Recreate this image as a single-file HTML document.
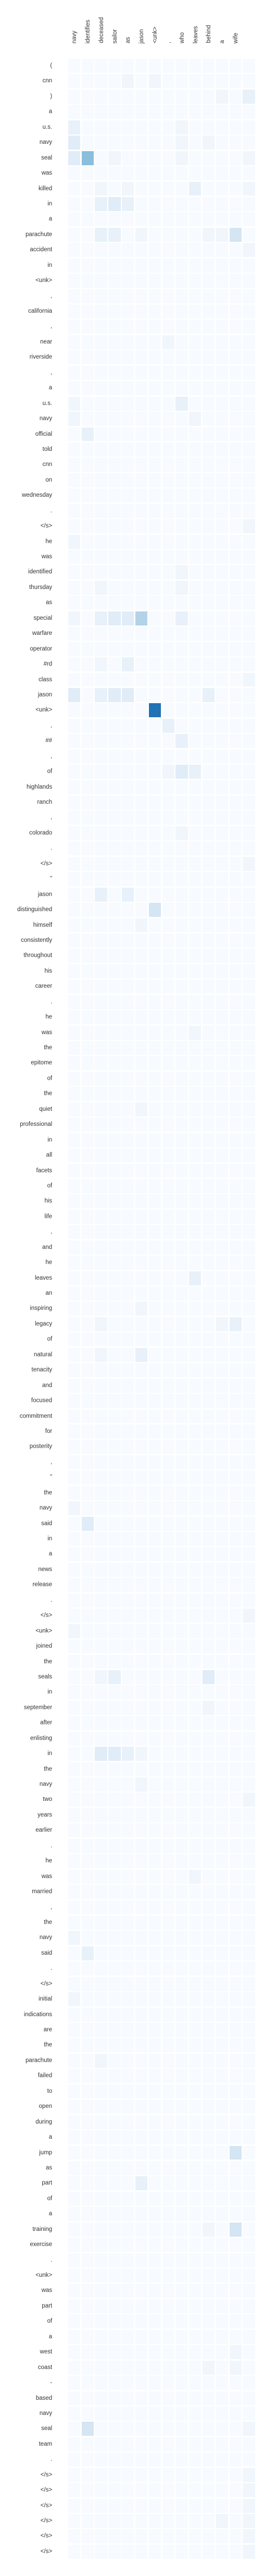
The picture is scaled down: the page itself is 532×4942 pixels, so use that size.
<!DOCTYPE html>
<html><head><meta charset="utf-8">
<style>
*{margin:0;padding:0;box-sizing:border-box}
html,body{width:532px;height:4942px;background:#fff;overflow:hidden}
body{position:relative;font-family:"Liberation Sans",sans-serif;font-size:11.5px;color:#333}
#hd{position:absolute;left:130.7px;top:0;height:83px;display:flex;align-items:flex-end}
#hd div{width:25.83px;display:flex;justify-content:center;align-items:flex-end;height:83px}
#hd span{writing-mode:vertical-rl;transform:rotate(180deg);line-height:13px;white-space:nowrap}
#g{position:absolute;left:30.2px;top:113px;display:grid;grid-template-columns:98px repeat(14,23.3px);grid-auto-rows:26.94px;column-gap:2.54px;row-gap:2.5px}
#g b{font-weight:normal;text-align:right;padding-right:28px;line-height:26.94px;white-space:nowrap;overflow:visible}
#g i{display:block;background:#f7fbff}
#g i.a{background:#f0f6fc}#g i.b{background:#e8f1fa}#g i.c{background:#e0ecf8}#g i.d{background:#d4e5f3}#g i.e{background:#b3d3e8}#g i.f{background:#89bedc}#g i.g{background:#2171b5}
</style></head><body>
<div id="hd"><div><span>navy</span></div><div><span>identifies</span></div><div><span>deceased</span></div><div><span>sailor</span></div><div><span>as</span></div><div><span>jason</span></div><div><span>&lt;unk&gt;</span></div><div><span>,</span></div><div><span>who</span></div><div><span>leaves</span></div><div><span>behind</span></div><div><span>a</span></div><div><span>wife</span></div><div><span></span></div></div>
<div id="g">
<b>(</b><i></i><i></i><i></i><i></i><i></i><i></i><i></i><i></i><i></i><i></i><i></i><i></i><i></i><i></i>
<b>cnn</b><i></i><i></i><i></i><i></i><i class="a"></i><i></i><i class="a"></i><i></i><i></i><i></i><i></i><i></i><i></i><i></i>
<b>)</b><i></i><i></i><i></i><i></i><i></i><i></i><i></i><i></i><i></i><i></i><i></i><i class="a"></i><i></i><i class="b"></i>
<b>a</b><i></i><i></i><i></i><i></i><i></i><i></i><i></i><i></i><i></i><i></i><i></i><i></i><i></i><i></i>
<b>u.s.</b><i class="b"></i><i></i><i></i><i></i><i></i><i></i><i></i><i></i><i class="a"></i><i></i><i></i><i></i><i></i><i></i>
<b>navy</b><i class="c"></i><i></i><i></i><i></i><i></i><i></i><i></i><i></i><i class="a"></i><i></i><i class="a"></i><i></i><i></i><i></i>
<b>seal</b><i class="c"></i><i class="f"></i><i></i><i class="a"></i><i></i><i></i><i></i><i></i><i class="a"></i><i></i><i></i><i></i><i></i><i class="a"></i>
<b>was</b><i></i><i></i><i></i><i></i><i></i><i></i><i></i><i></i><i></i><i></i><i></i><i></i><i></i><i></i>
<b>killed</b><i></i><i></i><i class="a"></i><i></i><i class="a"></i><i></i><i></i><i></i><i></i><i class="b"></i><i></i><i></i><i></i><i class="a"></i>
<b>in</b><i></i><i></i><i class="b"></i><i class="c"></i><i class="b"></i><i></i><i></i><i></i><i></i><i></i><i></i><i></i><i></i><i></i>
<b>a</b><i></i><i></i><i></i><i></i><i></i><i></i><i></i><i></i><i></i><i></i><i></i><i></i><i></i><i></i>
<b>parachute</b><i></i><i></i><i class="b"></i><i class="b"></i><i></i><i class="a"></i><i></i><i></i><i></i><i></i><i class="a"></i><i class="a"></i><i class="d"></i><i></i>
<b>accident</b><i></i><i></i><i></i><i></i><i></i><i></i><i></i><i></i><i></i><i></i><i></i><i></i><i></i><i class="a"></i>
<b>in</b><i></i><i></i><i></i><i></i><i></i><i></i><i></i><i></i><i></i><i></i><i></i><i></i><i></i><i></i>
<b>&lt;unk&gt;</b><i></i><i></i><i></i><i></i><i></i><i></i><i></i><i></i><i></i><i></i><i></i><i></i><i></i><i></i>
<b>,</b><i></i><i></i><i></i><i></i><i></i><i></i><i></i><i></i><i></i><i></i><i></i><i></i><i></i><i></i>
<b>california</b><i></i><i></i><i></i><i></i><i></i><i></i><i></i><i></i><i></i><i></i><i></i><i></i><i></i><i></i>
<b>,</b><i></i><i></i><i></i><i></i><i></i><i></i><i></i><i></i><i></i><i></i><i></i><i></i><i></i><i></i>
<b>near</b><i></i><i></i><i></i><i></i><i></i><i></i><i></i><i class="a"></i><i></i><i></i><i></i><i></i><i></i><i></i>
<b>riverside</b><i></i><i></i><i></i><i></i><i></i><i></i><i></i><i></i><i></i><i></i><i></i><i></i><i></i><i></i>
<b>,</b><i></i><i></i><i></i><i></i><i></i><i></i><i></i><i></i><i></i><i></i><i></i><i></i><i></i><i></i>
<b>a</b><i></i><i></i><i></i><i></i><i></i><i></i><i></i><i></i><i></i><i></i><i></i><i></i><i></i><i></i>
<b>u.s.</b><i class="a"></i><i></i><i></i><i></i><i></i><i></i><i></i><i></i><i class="b"></i><i></i><i></i><i></i><i></i><i></i>
<b>navy</b><i class="a"></i><i></i><i></i><i></i><i></i><i></i><i></i><i></i><i></i><i class="a"></i><i></i><i></i><i></i><i></i>
<b>official</b><i></i><i class="b"></i><i></i><i></i><i></i><i></i><i></i><i></i><i></i><i></i><i></i><i></i><i></i><i></i>
<b>told</b><i></i><i></i><i></i><i></i><i></i><i></i><i></i><i></i><i></i><i></i><i></i><i></i><i></i><i></i>
<b>cnn</b><i></i><i></i><i></i><i></i><i></i><i></i><i></i><i></i><i></i><i></i><i></i><i></i><i></i><i></i>
<b>on</b><i></i><i></i><i></i><i></i><i></i><i></i><i></i><i></i><i></i><i></i><i></i><i></i><i></i><i></i>
<b>wednesday</b><i></i><i></i><i></i><i></i><i></i><i></i><i></i><i></i><i></i><i></i><i></i><i></i><i></i><i></i>
<b>.</b><i></i><i></i><i></i><i></i><i></i><i></i><i></i><i></i><i></i><i></i><i></i><i></i><i></i><i></i>
<b>&lt;/s&gt;</b><i></i><i></i><i></i><i></i><i></i><i></i><i></i><i></i><i></i><i></i><i></i><i></i><i></i><i class="a"></i>
<b>he</b><i class="a"></i><i></i><i></i><i></i><i></i><i></i><i></i><i></i><i></i><i></i><i></i><i></i><i></i><i></i>
<b>was</b><i></i><i></i><i></i><i></i><i></i><i></i><i></i><i></i><i></i><i></i><i></i><i></i><i></i><i></i>
<b>identified</b><i></i><i></i><i></i><i></i><i></i><i></i><i></i><i></i><i class="a"></i><i></i><i></i><i></i><i></i><i></i>
<b>thursday</b><i></i><i></i><i class="a"></i><i></i><i></i><i></i><i></i><i></i><i class="a"></i><i></i><i></i><i></i><i></i><i></i>
<b>as</b><i></i><i></i><i></i><i></i><i></i><i></i><i></i><i></i><i></i><i></i><i></i><i></i><i></i><i></i>
<b>special</b><i class="a"></i><i></i><i class="b"></i><i class="c"></i><i class="c"></i><i class="e"></i><i></i><i></i><i class="b"></i><i></i><i></i><i></i><i></i><i></i>
<b>warfare</b><i></i><i></i><i></i><i></i><i></i><i></i><i></i><i></i><i></i><i></i><i></i><i></i><i></i><i></i>
<b>operator</b><i></i><i></i><i></i><i></i><i></i><i></i><i></i><i></i><i></i><i></i><i></i><i></i><i></i><i></i>
<b>#rd</b><i></i><i></i><i class="a"></i><i></i><i class="b"></i><i></i><i></i><i></i><i></i><i></i><i></i><i></i><i></i><i></i>
<b>class</b><i></i><i></i><i></i><i></i><i></i><i></i><i></i><i></i><i></i><i></i><i></i><i></i><i></i><i class="a"></i>
<b>jason</b><i class="c"></i><i></i><i class="b"></i><i class="c"></i><i class="c"></i><i></i><i></i><i></i><i></i><i></i><i class="b"></i><i></i><i></i><i></i>
<b>&lt;unk&gt;</b><i></i><i></i><i></i><i></i><i></i><i></i><i class="g"></i><i></i><i></i><i></i><i></i><i></i><i></i><i></i>
<b>,</b><i></i><i></i><i></i><i></i><i></i><i></i><i></i><i class="b"></i><i></i><i></i><i></i><i></i><i></i><i></i>
<b>##</b><i></i><i></i><i></i><i></i><i></i><i></i><i></i><i></i><i class="b"></i><i></i><i></i><i></i><i></i><i></i>
<b>,</b><i></i><i></i><i></i><i></i><i></i><i></i><i></i><i></i><i></i><i></i><i></i><i></i><i></i><i></i>
<b>of</b><i></i><i></i><i></i><i></i><i></i><i></i><i></i><i class="a"></i><i class="c"></i><i class="b"></i><i></i><i></i><i></i><i></i>
<b>highlands</b><i></i><i></i><i></i><i></i><i></i><i></i><i></i><i></i><i></i><i></i><i></i><i></i><i></i><i></i>
<b>ranch</b><i></i><i></i><i></i><i></i><i></i><i></i><i></i><i></i><i></i><i></i><i></i><i></i><i></i><i></i>
<b>,</b><i></i><i></i><i></i><i></i><i></i><i></i><i></i><i></i><i></i><i></i><i></i><i></i><i></i><i></i>
<b>colorado</b><i></i><i></i><i></i><i></i><i></i><i></i><i></i><i></i><i class="a"></i><i></i><i></i><i></i><i></i><i></i>
<b>.</b><i></i><i></i><i></i><i></i><i></i><i></i><i></i><i></i><i></i><i></i><i></i><i></i><i></i><i></i>
<b>&lt;/s&gt;</b><i></i><i></i><i></i><i></i><i></i><i></i><i></i><i></i><i></i><i></i><i></i><i></i><i></i><i class="a"></i>
<b>"</b><i></i><i></i><i></i><i></i><i></i><i></i><i></i><i></i><i></i><i></i><i></i><i></i><i></i><i></i>
<b>jason</b><i></i><i></i><i class="b"></i><i></i><i class="b"></i><i></i><i></i><i></i><i></i><i></i><i></i><i></i><i></i><i></i>
<b>distinguished</b><i></i><i></i><i></i><i></i><i></i><i></i><i class="d"></i><i></i><i></i><i></i><i></i><i></i><i></i><i></i>
<b>himself</b><i></i><i></i><i></i><i></i><i></i><i class="a"></i><i></i><i></i><i></i><i></i><i></i><i></i><i></i><i></i>
<b>consistently</b><i></i><i></i><i></i><i></i><i></i><i></i><i></i><i></i><i></i><i></i><i></i><i></i><i></i><i></i>
<b>throughout</b><i></i><i></i><i></i><i></i><i></i><i></i><i></i><i></i><i></i><i></i><i></i><i></i><i></i><i></i>
<b>his</b><i></i><i></i><i></i><i></i><i></i><i></i><i></i><i></i><i></i><i></i><i></i><i></i><i></i><i></i>
<b>career</b><i></i><i></i><i></i><i></i><i></i><i></i><i></i><i></i><i></i><i></i><i></i><i></i><i></i><i></i>
<b>.</b><i></i><i></i><i></i><i></i><i></i><i></i><i></i><i></i><i></i><i></i><i></i><i></i><i></i><i></i>
<b>he</b><i></i><i></i><i></i><i></i><i></i><i></i><i></i><i></i><i></i><i></i><i></i><i></i><i></i><i></i>
<b>was</b><i></i><i></i><i></i><i></i><i></i><i></i><i></i><i></i><i></i><i class="a"></i><i></i><i></i><i></i><i></i>
<b>the</b><i></i><i></i><i></i><i></i><i></i><i></i><i></i><i></i><i></i><i></i><i></i><i></i><i></i><i></i>
<b>epitome</b><i></i><i></i><i></i><i></i><i></i><i></i><i></i><i></i><i></i><i></i><i></i><i></i><i></i><i></i>
<b>of</b><i></i><i></i><i></i><i></i><i></i><i></i><i></i><i></i><i></i><i></i><i></i><i></i><i></i><i></i>
<b>the</b><i></i><i></i><i></i><i></i><i></i><i></i><i></i><i></i><i></i><i></i><i></i><i></i><i></i><i></i>
<b>quiet</b><i></i><i></i><i></i><i></i><i></i><i class="a"></i><i></i><i></i><i></i><i></i><i></i><i></i><i></i><i></i>
<b>professional</b><i></i><i></i><i></i><i></i><i></i><i></i><i></i><i></i><i></i><i></i><i></i><i></i><i></i><i></i>
<b>in</b><i></i><i></i><i></i><i></i><i></i><i></i><i></i><i></i><i></i><i></i><i></i><i></i><i></i><i></i>
<b>all</b><i></i><i></i><i></i><i></i><i></i><i></i><i></i><i></i><i></i><i></i><i></i><i></i><i></i><i></i>
<b>facets</b><i></i><i></i><i></i><i></i><i></i><i></i><i></i><i></i><i></i><i></i><i></i><i></i><i></i><i></i>
<b>of</b><i></i><i></i><i></i><i></i><i></i><i></i><i></i><i></i><i></i><i></i><i></i><i></i><i></i><i></i>
<b>his</b><i></i><i></i><i></i><i></i><i></i><i></i><i></i><i></i><i></i><i></i><i></i><i></i><i></i><i></i>
<b>life</b><i></i><i></i><i></i><i></i><i></i><i></i><i></i><i></i><i></i><i></i><i></i><i></i><i></i><i></i>
<b>,</b><i></i><i></i><i></i><i></i><i></i><i></i><i></i><i></i><i></i><i></i><i></i><i></i><i></i><i></i>
<b>and</b><i></i><i></i><i></i><i></i><i></i><i></i><i></i><i></i><i></i><i></i><i></i><i></i><i></i><i></i>
<b>he</b><i></i><i></i><i></i><i></i><i></i><i></i><i></i><i></i><i></i><i></i><i></i><i></i><i></i><i></i>
<b>leaves</b><i></i><i></i><i></i><i></i><i></i><i></i><i></i><i></i><i></i><i class="b"></i><i></i><i></i><i></i><i></i>
<b>an</b><i></i><i></i><i></i><i></i><i></i><i></i><i></i><i></i><i></i><i></i><i></i><i></i><i></i><i></i>
<b>inspiring</b><i></i><i></i><i></i><i></i><i></i><i class="a"></i><i></i><i></i><i></i><i></i><i></i><i></i><i></i><i></i>
<b>legacy</b><i></i><i></i><i class="a"></i><i></i><i></i><i></i><i></i><i></i><i></i><i></i><i></i><i class="a"></i><i class="b"></i><i></i>
<b>of</b><i></i><i></i><i></i><i></i><i></i><i></i><i></i><i></i><i></i><i></i><i></i><i></i><i></i><i></i>
<b>natural</b><i></i><i></i><i class="a"></i><i></i><i></i><i class="b"></i><i></i><i></i><i></i><i></i><i></i><i></i><i></i><i></i>
<b>tenacity</b><i></i><i></i><i></i><i></i><i></i><i></i><i></i><i></i><i></i><i></i><i></i><i></i><i></i><i></i>
<b>and</b><i></i><i></i><i></i><i></i><i></i><i></i><i></i><i></i><i></i><i></i><i></i><i></i><i></i><i></i>
<b>focused</b><i></i><i></i><i></i><i></i><i></i><i></i><i></i><i></i><i></i><i></i><i></i><i></i><i></i><i></i>
<b>commitment</b><i></i><i></i><i></i><i></i><i></i><i></i><i></i><i></i><i></i><i></i><i></i><i></i><i></i><i></i>
<b>for</b><i></i><i></i><i></i><i></i><i></i><i></i><i></i><i></i><i></i><i></i><i></i><i></i><i></i><i></i>
<b>posterity</b><i></i><i></i><i></i><i></i><i></i><i></i><i></i><i></i><i></i><i></i><i></i><i></i><i></i><i></i>
<b>,</b><i></i><i></i><i></i><i></i><i></i><i></i><i></i><i></i><i></i><i></i><i></i><i></i><i></i><i></i>
<b>"</b><i></i><i></i><i></i><i></i><i></i><i></i><i></i><i></i><i></i><i></i><i></i><i></i><i></i><i></i>
<b>the</b><i></i><i></i><i></i><i></i><i></i><i></i><i></i><i></i><i></i><i></i><i></i><i></i><i></i><i></i>
<b>navy</b><i class="a"></i><i></i><i></i><i></i><i></i><i></i><i></i><i></i><i></i><i></i><i></i><i></i><i></i><i></i>
<b>said</b><i></i><i class="c"></i><i></i><i></i><i></i><i></i><i></i><i></i><i></i><i></i><i></i><i></i><i></i><i></i>
<b>in</b><i></i><i></i><i></i><i></i><i></i><i></i><i></i><i></i><i></i><i></i><i></i><i></i><i></i><i></i>
<b>a</b><i></i><i></i><i></i><i></i><i></i><i></i><i></i><i></i><i></i><i></i><i></i><i></i><i></i><i></i>
<b>news</b><i></i><i></i><i></i><i></i><i></i><i></i><i></i><i></i><i></i><i></i><i></i><i></i><i></i><i></i>
<b>release</b><i></i><i></i><i></i><i></i><i></i><i></i><i></i><i></i><i></i><i></i><i></i><i></i><i></i><i></i>
<b>.</b><i></i><i></i><i></i><i></i><i></i><i></i><i></i><i></i><i></i><i></i><i></i><i></i><i></i><i></i>
<b>&lt;/s&gt;</b><i></i><i></i><i></i><i></i><i></i><i></i><i></i><i></i><i></i><i></i><i></i><i></i><i></i><i class="a"></i>
<b>&lt;unk&gt;</b><i class="a"></i><i></i><i></i><i></i><i></i><i></i><i></i><i></i><i></i><i></i><i></i><i></i><i></i><i></i>
<b>joined</b><i></i><i></i><i></i><i></i><i></i><i></i><i></i><i></i><i></i><i></i><i></i><i></i><i></i><i></i>
<b>the</b><i></i><i></i><i></i><i></i><i></i><i></i><i></i><i></i><i></i><i></i><i></i><i></i><i></i><i></i>
<b>seals</b><i></i><i></i><i class="a"></i><i class="b"></i><i></i><i></i><i></i><i></i><i></i><i></i><i class="c"></i><i></i><i></i><i></i>
<b>in</b><i></i><i></i><i></i><i></i><i></i><i></i><i></i><i></i><i></i><i></i><i></i><i></i><i></i><i></i>
<b>september</b><i></i><i></i><i></i><i></i><i></i><i></i><i></i><i></i><i></i><i></i><i class="a"></i><i></i><i></i><i></i>
<b>after</b><i></i><i></i><i></i><i></i><i></i><i></i><i></i><i></i><i></i><i></i><i></i><i></i><i></i><i></i>
<b>enlisting</b><i></i><i></i><i></i><i></i><i></i><i></i><i></i><i></i><i></i><i></i><i></i><i></i><i></i><i></i>
<b>in</b><i></i><i></i><i class="c"></i><i class="c"></i><i class="b"></i><i class="a"></i><i></i><i></i><i></i><i></i><i></i><i></i><i></i><i></i>
<b>the</b><i></i><i></i><i></i><i></i><i></i><i></i><i></i><i></i><i></i><i></i><i></i><i></i><i></i><i></i>
<b>navy</b><i></i><i></i><i></i><i></i><i></i><i class="a"></i><i></i><i></i><i></i><i></i><i></i><i></i><i></i><i></i>
<b>two</b><i></i><i></i><i></i><i></i><i></i><i></i><i></i><i></i><i></i><i></i><i></i><i></i><i></i><i class="a"></i>
<b>years</b><i></i><i></i><i></i><i></i><i></i><i></i><i></i><i></i><i></i><i></i><i></i><i></i><i></i><i></i>
<b>earlier</b><i></i><i></i><i></i><i></i><i></i><i></i><i></i><i></i><i></i><i></i><i></i><i></i><i></i><i></i>
<b>.</b><i></i><i></i><i></i><i></i><i></i><i></i><i></i><i></i><i></i><i></i><i></i><i></i><i></i><i></i>
<b>he</b><i></i><i></i><i></i><i></i><i></i><i></i><i></i><i></i><i></i><i></i><i></i><i></i><i></i><i></i>
<b>was</b><i></i><i></i><i></i><i></i><i></i><i></i><i></i><i></i><i></i><i class="a"></i><i></i><i></i><i></i><i></i>
<b>married</b><i></i><i></i><i></i><i></i><i></i><i></i><i></i><i></i><i></i><i></i><i></i><i></i><i></i><i></i>
<b>,</b><i></i><i></i><i></i><i></i><i></i><i></i><i></i><i></i><i></i><i></i><i></i><i></i><i></i><i></i>
<b>the</b><i></i><i></i><i></i><i></i><i></i><i></i><i></i><i></i><i></i><i></i><i></i><i></i><i></i><i></i>
<b>navy</b><i class="a"></i><i></i><i></i><i></i><i></i><i></i><i></i><i></i><i></i><i></i><i></i><i></i><i></i><i></i>
<b>said</b><i></i><i class="b"></i><i></i><i></i><i></i><i></i><i></i><i></i><i></i><i></i><i></i><i></i><i></i><i></i>
<b>.</b><i></i><i></i><i></i><i></i><i></i><i></i><i></i><i></i><i></i><i></i><i></i><i></i><i></i><i></i>
<b>&lt;/s&gt;</b><i></i><i></i><i></i><i></i><i></i><i></i><i></i><i></i><i></i><i></i><i></i><i></i><i></i><i></i>
<b>initial</b><i class="a"></i><i></i><i></i><i></i><i></i><i></i><i></i><i></i><i></i><i></i><i></i><i></i><i></i><i></i>
<b>indications</b><i></i><i></i><i></i><i></i><i></i><i></i><i></i><i></i><i></i><i></i><i></i><i></i><i></i><i></i>
<b>are</b><i></i><i></i><i></i><i></i><i></i><i></i><i></i><i></i><i></i><i></i><i></i><i></i><i></i><i></i>
<b>the</b><i></i><i></i><i></i><i></i><i></i><i></i><i></i><i></i><i></i><i></i><i></i><i></i><i></i><i></i>
<b>parachute</b><i></i><i></i><i class="a"></i><i></i><i></i><i></i><i></i><i></i><i></i><i></i><i></i><i></i><i></i><i></i>
<b>failed</b><i></i><i></i><i></i><i></i><i></i><i></i><i></i><i></i><i></i><i></i><i></i><i></i><i></i><i></i>
<b>to</b><i></i><i></i><i></i><i></i><i></i><i></i><i></i><i></i><i></i><i></i><i></i><i></i><i></i><i></i>
<b>open</b><i></i><i></i><i></i><i></i><i></i><i></i><i></i><i></i><i></i><i></i><i></i><i></i><i></i><i></i>
<b>during</b><i></i><i></i><i></i><i></i><i></i><i></i><i></i><i></i><i></i><i></i><i></i><i></i><i></i><i></i>
<b>a</b><i></i><i></i><i></i><i></i><i></i><i></i><i></i><i></i><i></i><i></i><i></i><i></i><i></i><i></i>
<b>jump</b><i></i><i></i><i></i><i></i><i></i><i></i><i></i><i></i><i></i><i></i><i></i><i></i><i class="d"></i><i></i>
<b>as</b><i></i><i></i><i></i><i></i><i></i><i></i><i></i><i></i><i></i><i></i><i></i><i></i><i></i><i></i>
<b>part</b><i></i><i></i><i></i><i></i><i></i><i class="b"></i><i></i><i></i><i></i><i></i><i></i><i></i><i></i><i></i>
<b>of</b><i></i><i></i><i></i><i></i><i></i><i></i><i></i><i></i><i></i><i></i><i></i><i></i><i></i><i></i>
<b>a</b><i></i><i></i><i></i><i></i><i></i><i></i><i></i><i></i><i></i><i></i><i></i><i></i><i></i><i></i>
<b>training</b><i></i><i></i><i></i><i></i><i></i><i></i><i></i><i></i><i></i><i></i><i class="a"></i><i></i><i class="d"></i><i></i>
<b>exercise</b><i></i><i></i><i></i><i></i><i></i><i></i><i></i><i></i><i></i><i></i><i></i><i></i><i></i><i></i>
<b>.</b><i></i><i></i><i></i><i></i><i></i><i></i><i></i><i></i><i></i><i></i><i></i><i></i><i></i><i></i>
<b>&lt;unk&gt;</b><i></i><i></i><i></i><i></i><i></i><i></i><i></i><i></i><i></i><i></i><i></i><i></i><i></i><i></i>
<b>was</b><i></i><i></i><i></i><i></i><i></i><i></i><i></i><i></i><i></i><i></i><i></i><i></i><i></i><i></i>
<b>part</b><i></i><i></i><i></i><i></i><i></i><i></i><i></i><i></i><i></i><i></i><i></i><i></i><i></i><i></i>
<b>of</b><i></i><i></i><i></i><i></i><i></i><i></i><i></i><i></i><i></i><i></i><i></i><i></i><i></i><i></i>
<b>a</b><i></i><i></i><i></i><i></i><i></i><i></i><i></i><i></i><i></i><i></i><i></i><i></i><i></i><i></i>
<b>west</b><i></i><i></i><i></i><i></i><i></i><i></i><i></i><i></i><i></i><i></i><i></i><i></i><i class="a"></i><i></i>
<b>coast</b><i></i><i></i><i></i><i></i><i></i><i></i><i></i><i></i><i></i><i></i><i class="a"></i><i></i><i class="a"></i><i></i>
<b>-</b><i></i><i></i><i></i><i></i><i></i><i></i><i></i><i></i><i></i><i></i><i></i><i></i><i></i><i></i>
<b>based</b><i></i><i></i><i></i><i></i><i></i><i></i><i></i><i></i><i></i><i></i><i></i><i></i><i></i><i></i>
<b>navy</b><i></i><i></i><i></i><i></i><i></i><i></i><i></i><i></i><i></i><i></i><i></i><i></i><i></i><i></i>
<b>seal</b><i></i><i class="d"></i><i></i><i></i><i></i><i></i><i></i><i></i><i></i><i></i><i></i><i></i><i></i><i class="a"></i>
<b>team</b><i></i><i></i><i></i><i></i><i></i><i></i><i></i><i></i><i></i><i></i><i></i><i></i><i></i><i></i>
<b>.</b><i></i><i></i><i></i><i></i><i></i><i></i><i></i><i></i><i></i><i></i><i></i><i></i><i></i><i></i>
<b>&lt;/s&gt;</b><i></i><i></i><i></i><i></i><i></i><i></i><i></i><i></i><i></i><i></i><i></i><i></i><i></i><i class="a"></i>
<b>&lt;/s&gt;</b><i></i><i></i><i></i><i></i><i></i><i></i><i></i><i></i><i></i><i></i><i></i><i></i><i></i><i class="a"></i>
<b>&lt;/s&gt;</b><i></i><i></i><i></i><i></i><i></i><i></i><i></i><i></i><i></i><i></i><i></i><i></i><i></i><i class="a"></i>
<b>&lt;/s&gt;</b><i></i><i></i><i></i><i></i><i></i><i></i><i></i><i></i><i></i><i></i><i></i><i class="a"></i><i></i><i class="a"></i>
<b>&lt;/s&gt;</b><i></i><i></i><i></i><i></i><i></i><i></i><i></i><i></i><i></i><i></i><i></i><i></i><i></i><i class="a"></i>
<b>&lt;/s&gt;</b><i></i><i></i><i></i><i></i><i></i><i></i><i></i><i></i><i></i><i></i><i></i><i></i><i></i><i class="a"></i>
</div>
</body></html>
